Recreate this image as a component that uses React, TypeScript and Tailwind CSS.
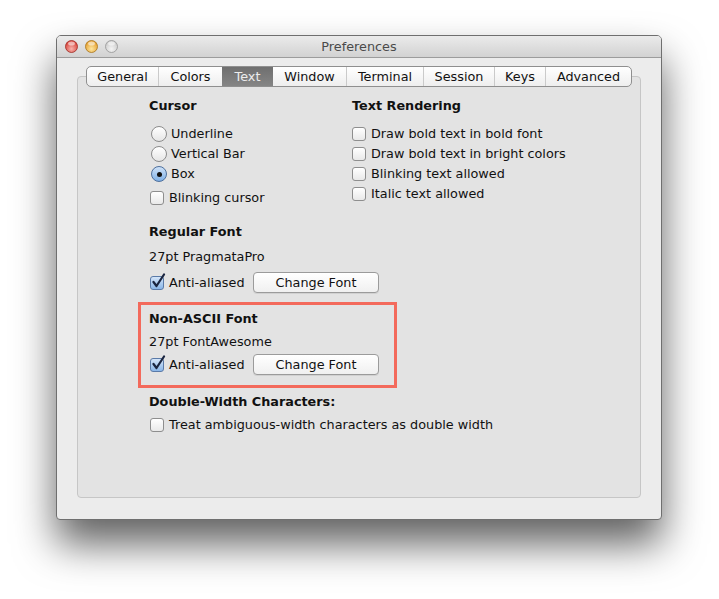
import React from "react";

const TABS = [
  { label: "General", w: "w-[71px]" },
  { label: "Colors", w: "w-[64px]" },
  { label: "Text", w: "w-[51px]" },
  { label: "Window", w: "w-[73px]" },
  { label: "Terminal", w: "w-[77px]" },
  { label: "Session", w: "w-[71px]" },
  { label: "Keys", w: "w-[51px]" },
  { label: "Advanced", w: "w-[86px]" },
];

function Light({ kind }: { kind: "red" | "yellow" | "grey" }) {
  const c = {
    red: { a: "#f7b3ad", b: "#d9463d", c: "#9e2a22", id: "lr" },
    yellow: { a: "#fde6a0", b: "#e6a233", c: "#a8731a", id: "ly" },
    grey: { a: "#f4f4f4", b: "#cdcdcd", c: "#969696", id: "lg" },
  }[kind];
  return (
    <svg width="13" height="13" viewBox="0 0 13 13">
      <defs>
        <radialGradient id={c.id} cx="50%" cy="70%" r="60%">
          <stop offset="0%" stopColor={c.a} />
          <stop offset="100%" stopColor={c.b} />
        </radialGradient>
      </defs>
      <circle cx="6.5" cy="6.5" r="6" fill={`url(#${c.id})`} stroke={c.c} strokeWidth="0.8" />
      <ellipse cx="6.5" cy="3.6" rx="3.4" ry="2" fill="white" opacity="0.55" />
    </svg>
  );
}

function Radio({ checked, label }: { checked?: boolean; label: string }) {
  return (
    <div className="flex h-[20px] items-center gap-[4px] pl-[2px]">
      {checked ? (
        <div className="flex h-[16px] w-[16px] items-center justify-center rounded-full border border-[#4d6f9c] bg-gradient-to-b from-[#cfe2f8] to-[#7fb0e6]">
          <div className="h-[5px] w-[5px] rounded-full bg-[#111]" />
        </div>
      ) : (
        <div className="h-[16px] w-[16px] rounded-full border border-[#8c8c8c] bg-gradient-to-b from-white to-[#e6e6e6]" />
      )}
      <span>{label}</span>
    </div>
  );
}

function Check({ checked, label }: { checked?: boolean; label: string }) {
  return (
    <div className="flex items-center gap-[5px] pl-[1px]">
      <div className="relative h-[14px] w-[14px]">
        {checked ? (
          <div className="h-[14px] w-[14px] rounded-[3px] border border-[#5a7aa8] bg-gradient-to-b from-[#d4e5f9] to-[#8ab6e8]" />
        ) : (
          <div className="h-[14px] w-[14px] rounded-[3px] border border-[#8e8e8e] bg-gradient-to-b from-white to-[#e9e9e9]" />
        )}
        {checked && (
          <svg className="absolute -top-[3px] left-[1px]" width="15" height="16" viewBox="0 0 15 16">
            <path d="M2.5 9 L5.5 13 L13 1.5" fill="none" stroke="#1a2540" strokeWidth="2.2" strokeLinecap="round" strokeLinejoin="round" />
          </svg>
        )}
      </div>
      <span>{label}</span>
    </div>
  );
}

function Button({ label }: { label: string }) {
  return (
    <div className="flex h-[21px] w-[126px] items-center justify-center rounded-[4px] border border-[#9b9b9b] bg-gradient-to-b from-white to-[#f0f0f0] shadow-[0_1px_0_rgba(0,0,0,0.08)]">
      {label}
    </div>
  );
}

export default function App() {
  return (
    <div
      className="h-[599px] w-[719px] bg-white pl-[56px] pt-[35px] text-[12.8px] text-[#111]"
      style={{ fontFamily: '"DejaVu Sans", "Lucida Grande", sans-serif' }}
    >
      <div className="h-[485px] w-[606px] overflow-hidden rounded-t-[5px] rounded-b-[4px] border border-[#6f6f6f] bg-[#ececec] shadow-[0_24px_40px_rgba(0,0,0,0.62)]">
        <div className="relative flex h-[22px] items-center border-b border-[#9c9c9c] bg-gradient-to-b from-[#ebebeb] to-[#d2d2d2]">
          <div className="flex gap-[7px] pl-[8px]">
            <Light kind="red" />
            <Light kind="yellow" />
            <Light kind="grey" />
          </div>
          <div className="absolute inset-0 flex items-center justify-center text-[#4a4a4a]">Preferences</div>
        </div>

        <div className="px-[20px] pt-[8px]">
          <div className="relative z-10 flex justify-center">
            <div className="flex h-[21px] overflow-hidden rounded-[5px] border border-[#8f8f8f] bg-gradient-to-b from-white to-[#eeeeee]">
              {TABS.map((t, i) => {
                const sel = t.label === "Text";
                const prevSel = i > 0 && TABS[i - 1].label === "Text";
                return (
                  <div
                    key={t.label}
                    className={
                      sel
                        ? `${t.w} flex items-center justify-center bg-gradient-to-b from-[#6f6f6f] to-[#858585] text-[#ececec]`
                        : i === 0 || prevSel
                          ? `${t.w} flex items-center justify-center`
                          : `${t.w} flex items-center justify-center border-l border-[#cacaca]`
                    }
                  >
                    {t.label}
                  </div>
                );
              })}
            </div>
          </div>

          <div className="-mt-[11px] h-[422px] rounded-[4px] border border-[#c6c6c6] bg-[#e3e3e3] pl-[71px] pt-[19px]">
            <div className="flex">
              <div className="w-[202px]">
                <div className="h-[20px] font-bold leading-[20px]">Cursor</div>
                <div className="mt-[8px]">
                  <Radio label="Underline" />
                  <Radio label="Vertical Bar" />
                  <Radio checked label="Box" />
                </div>
                <div className="mt-[4px] flex h-[20px] items-center">
                  <Check label="Blinking cursor" />
                </div>
              </div>
              <div>
                <div className="h-[20px] pl-[1px] font-bold leading-[20px]">Text Rendering</div>
                <div className="mt-[8px]">
                  <div className="flex h-[20px] items-center"><Check label="Draw bold text in bold font" /></div>
                  <div className="flex h-[20px] items-center"><Check label="Draw bold text in bright colors" /></div>
                  <div className="flex h-[20px] items-center"><Check label="Blinking text allowed" /></div>
                  <div className="flex h-[20px] items-center"><Check label="Italic text allowed" /></div>
                </div>
              </div>
            </div>

            <div className="mt-[14px] h-[20px] font-bold leading-[20px]">Regular Font</div>
            <div className="mt-[5px] h-[20px] leading-[20px]">27pt PragmataPro</div>
            <div className="mt-[5px] flex h-[21px] items-center">
              <div className="w-[104px]">
                <Check checked label="Anti-aliased" />
              </div>
              <Button label="Change Font" />
            </div>

            <div className="-ml-[11px] mt-[9px] w-[259px] border-[3px] border-[#f36a5c] pb-[10px] pl-[8px] pt-[4px]">
              <div className="h-[20px] font-bold leading-[20px]">Non-ASCII Font</div>
              <div className="mt-[3px] h-[20px] leading-[20px]">27pt FontAwesome</div>
              <div className="mt-[2px] flex h-[21px] items-center">
                <div className="w-[104px]">
                  <Check checked label="Anti-aliased" />
                </div>
                <Button label="Change Font" />
              </div>
            </div>

            <div className="mt-[4px] h-[20px] font-bold leading-[20px]">Double-Width Characters:</div>
            <div className="mt-[3px] flex h-[20px] items-center">
              <Check label="Treat ambiguous-width characters as double width" />
            </div>
          </div>
        </div>
      </div>
    </div>
  );
}
